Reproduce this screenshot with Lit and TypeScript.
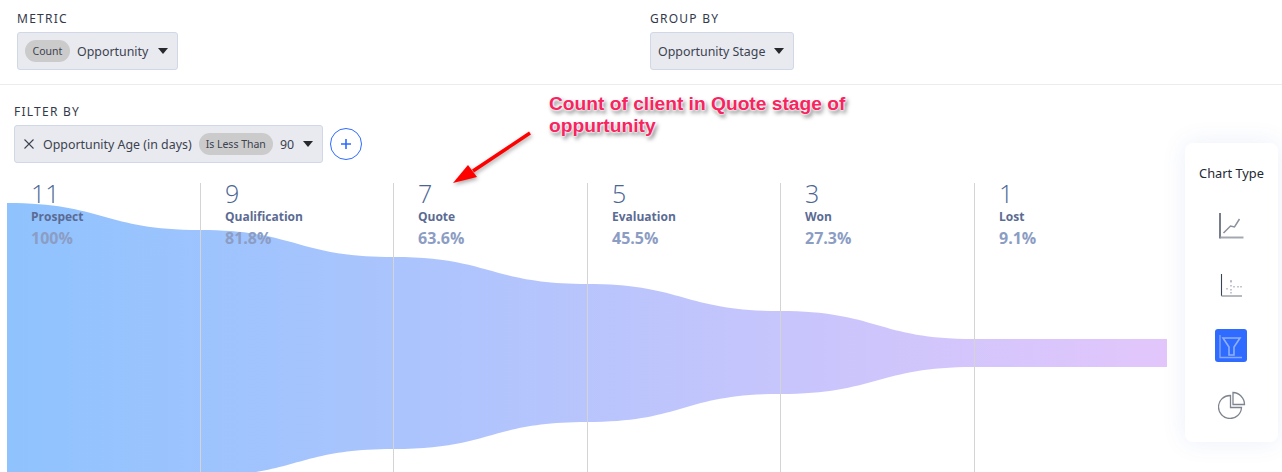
import { LitElement, html, css, svg } from 'lit';
import { customElement } from 'lit/decorators.js';

const stages = [
  { count: 11, name: 'Prospect', pct: '100%' },
  { count: 9, name: 'Qualification', pct: '81.8%' },
  { count: 7, name: 'Quote', pct: '63.6%' },
  { count: 5, name: 'Evaluation', pct: '45.5%' },
  { count: 3, name: 'Won', pct: '27.3%' },
  { count: 1, name: 'Lost', pct: '9.1%' },
];

// band edges at each divider, in chart coordinates (chart starts at y 183)
const xs = [0, 193, 386, 580, 773, 967, 1160];
const tops = [20, 47, 74, 101, 128, 156, 156];
const bottoms = [320, 293, 266, 239, 211, 184, 184];

function edge(ys: number[], reverse: boolean) {
  let d = '';
  const n = xs.length - 1;
  for (let i = 0; i < n; i++) {
    const a = reverse ? n - i : i;
    const b = reverse ? n - i - 1 : i + 1;
    const mid = (xs[a] + xs[b]) / 2;
    d += ` C${mid} ${ys[a]} ${mid} ${ys[b]} ${xs[b]} ${ys[b]}`;
  }
  return d;
}

const funnelPath = `M0 ${tops[0]}${edge(tops, false)} L1160 ${bottoms[6]}${edge(bottoms, true)} Z`;

const caret = html`<svg class="caret" width="10" height="6" viewBox="0 0 10 6"><path d="M0 0H10L5 6Z" fill="#26282e"></path></svg>`;

@customElement('app-root')
export class AppRoot extends LitElement {
  static styles = css`
    :host {
      display: block;
      position: relative;
      height: 472px;
      overflow: hidden;
      background: #fff;
      font-family: 'Noto Sans', 'Open Sans', sans-serif;
      color: #3c4250;
    }
    .top {
      display: flex;
      height: 85px;
      box-sizing: border-box;
      padding: 12px 0 0 17px;
      border-bottom: 1px solid #ececef;
    }
    .field-metric {
      width: 633px;
    }
    .label {
      font-size: 12px;
      line-height: 14px;
      letter-spacing: 1.25px;
      color: #33394a;
      margin-bottom: 6px;
    }
    .select {
      display: inline-flex;
      align-items: center;
      box-sizing: border-box;
      height: 38px;
      padding: 0 9px 0 7px;
      background: #e9eaef;
      border: 1px solid #d0d7e6;
      border-radius: 3px;
      font-size: 12.4px;
      white-space: nowrap;
    }
    .pill {
      display: inline-flex;
      align-items: center;
      justify-content: center;
      height: 22px;
      padding: 0 7px;
      border-radius: 11px;
      background: #cbcbcb;
      font-size: 10.5px;
    }
    .pill-count {
      box-sizing: border-box;
      width: 45px;
      padding: 0;
    }
    .after-pill {
      margin-left: 7px;
    }
    .caret {
      margin-left: 9px;
    }
    .field-metric .caret {
      margin-left: 10px;
    }
    .filter {
      padding: 20px 0 0 14px;
      height: 98px;
      box-sizing: border-box;
    }
    .filter-row {
      display: flex;
      align-items: center;
      gap: 7px;
    }
    .x {
      margin: 0 9px 0 2px;
    }
    .add {
      width: 32px;
      height: 32px;
      box-sizing: border-box;
      border: 1px solid #2f6bff;
      border-radius: 50%;
      display: flex;
      align-items: center;
      justify-content: center;
    }
    .chart {
      position: relative;
      margin-left: 7px;
      width: 1160px;
      height: 289px;
    }
    .funnel {
      position: absolute;
      inset: 0;
    }
    .columns {
      position: relative;
      display: grid;
      grid-template-columns: 193px 193px 194px 193px 194px 193px;
      height: 100%;
    }
    .col {
      padding-left: 24px;
      border-left: 1px solid #d4d4d4;
      box-sizing: border-box;
    }
    .col:first-child {
      border-left: none;
    }
    .count {
      font-size: 25px;
      font-weight: 300;
      line-height: 24px;
      margin-top: -2px;
      color: #4a6594;
      font-family: 'Open Sans', sans-serif;
    }
    .name {
      font-size: 12px;
      font-weight: 700;
      line-height: 14px;
      margin-top: 5px;
      color: #5b6b93;
      font-family: 'Open Sans', sans-serif;
    }
    .pct {
      font-size: 16px;
      font-weight: 700;
      line-height: 20px;
      margin-top: 4px;
      color: #8c9dc4;
      font-family: 'Open Sans', sans-serif;
    }
    .note {
      position: absolute;
      left: 549px;
      top: 93px;
      width: 320px;
      font-family: 'Liberation Sans', Arial, sans-serif;
      font-weight: 700;
      font-size: 19.2px;
      line-height: 22px;
      color: #f7245f;
      text-shadow: 0 0 2px #fff, 0 0 2px #fff, 0 0 3px #fff, 2px 3px 4px rgba(0, 0, 0, 0.6);
    }
    .arrow {
      position: absolute;
      left: 445px;
      top: 125px;
      filter: drop-shadow(1px 2px 2px rgba(0, 0, 0, 0.35));
    }
    .types {
      position: absolute;
      left: 1185px;
      top: 143px;
      width: 93px;
      height: 299px;
      background: #fff;
      border-radius: 8px;
      box-shadow: 0 0 24px rgba(70, 100, 200, 0.1);
      display: flex;
      flex-direction: column;
      align-items: center;
    }
    .types-title {
      font-size: 12.8px;
      line-height: 16px;
      margin: 22px 0 32px;
      color: #232833;
    }
    .types svg {
      display: block;
    }
    .types .gap {
      margin-bottom: 31px;
    }
    .types .tile {
      margin-left: -1px;
    }
    .types .pie {
      margin-top: -2px;
    }
  `;

  render() {
    return html`
      <div class="top">
        <div class="field-metric">
          <div class="label">METRIC</div>
          <div class="select">
            <span class="pill pill-count">Count</span>
            <span class="after-pill">Opportunity</span>
            ${caret}
          </div>
        </div>
        <div>
          <div class="label">GROUP BY</div>
          <div class="select"><span>Opportunity Stage</span>${caret}</div>
        </div>
      </div>
      <div class="filter">
        <div class="label">FILTER BY</div>
        <div class="filter-row">
          <div class="select">
            <svg class="x" width="10" height="10" viewBox="0 0 10 10"><path d="M.5.5l9 9M9.5.5l-9 9" stroke="#3c4250" stroke-width="1.1" fill="none"></path></svg>
            <span>Opportunity Age (in days)</span>
            <span class="pill after-pill">Is Less Than</span>
            <span class="after-pill">90</span>
            ${caret}
          </div>
          <div class="add">
            <svg width="12" height="12" viewBox="0 0 12 12"><path d="M6 1v10M1 6h10" stroke="#2f6bff" stroke-width="1.6" fill="none"></path></svg>
          </div>
        </div>
      </div>
      <div class="chart">
        <svg class="funnel" width="1160" height="289" viewBox="0 0 1160 289">
          <defs>
            <linearGradient id="band" x1="0" x2="1" y1="0" y2="0">
              <stop offset="0" stop-color="#8fc3fe"></stop>
              <stop offset="1" stop-color="#e2c6fb"></stop>
            </linearGradient>
          </defs>
          <path d=${funnelPath} fill="url(#band)"></path>
        </svg>
        <div class="columns">
          ${stages.map(
            (s) => html`<div class="col">
              <div class="count">${s.count}</div>
              <div class="name">${s.name}</div>
              <div class="pct">${s.pct}</div>
            </div>`
          )}
        </div>
      </div>
      <div class="note">Count of client in Quote stage of oppurtunity</div>
      <svg class="arrow" width="92" height="64" viewBox="0 0 92 64">
        <path d="M85 8L28 46" stroke="#f00" stroke-width="3.500" fill="none"></path>
        <path d="M8 58L23 40L32 52Z" fill="#f00"></path>
      </svg>
      <div class="types">
        <div class="types-title">Chart Type</div>
        ${this.lineIcon()} ${this.scatterIcon()} ${this.funnelIcon()} ${this.pieIcon()}
      </div>
    `;
  }

  lineIcon() {
    return html`<svg class="gap" width="26" height="26" viewBox="0 0 26 26">
      ${svg`<path d="M1 0V25.500" stroke="#2f3a4a" stroke-width="1.300" fill="none"></path>
      <path d="M1.500 24.500H24.500" stroke="#a3a8b0" stroke-width="2" fill="none"></path>
      <path d="M4.500 20L11.500 13L15.500 14L20.500 6" stroke="#8b919c" stroke-width="1.500" fill="none"></path>`}
    </svg>`;
  }

  scatterIcon() {
    const dots = [[11.5, 10], [11.5, 11], [7.5, 18], [11.5, 15], [14.5, 16], [18.5, 16], [21.5, 16], [11.5, 19], [11.5, 22]];
    return html`<svg class="gap" width="26" height="28" viewBox="0 0 26 28">
      ${svg`<path d="M2.500 4V26" stroke="#3a4452" stroke-width="1.100" fill="none"></path>
      <path d="M2.500 26H23" stroke="#a3a8b0" stroke-width="1.600" fill="none"></path>`}
      ${dots.map((d) => svg`<rect x=${d[0]} y=${d[1]} width="1" height="1.500" fill="#8b919c"></rect>`)}
    </svg>`;
  }

  funnelIcon() {
    return html`<svg class="gap tile" width="32" height="33" viewBox="0 0 32 33">
      ${svg`<rect width="32" height="33" rx="3" fill="#2f6bff"></rect>
      <path d="M5 6V28.500H27" stroke="#86a8ff" stroke-width="1.300" fill="none"></path>
      <path d="M8 9H25L19 18V26H14V18Z" stroke="#8fb0ff" stroke-width="1.600" fill="none"></path>`}
    </svg>`;
  }

  pieIcon() {
    return html`<svg class="pie" width="28" height="28" viewBox="0 0 28 28">
      ${svg`<path d="M12.500 4.500A11.500 11.500 0 1 0 23.500 16.500H12.500Z" stroke="#7f858f" stroke-width="1.300" fill="none"></path>
      <path d="M15 1.500A12 12 0 0 1 26.500 13.500H15Z" stroke="#7f858f" stroke-width="1.300" fill="none"></path>`}
    </svg>`;
  }
}
